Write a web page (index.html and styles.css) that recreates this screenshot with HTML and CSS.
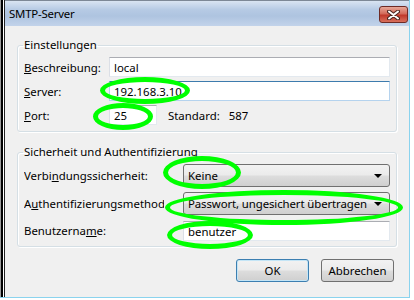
FILE: index.html
```html
<!DOCTYPE html>
<html lang="de">
<head>
  <meta charset="UTF-8">
  <meta name="viewport" content="width=device-width, initial-scale=1.0">
  <title>SMTP-Server</title>
  <link rel="stylesheet" href="styles.css">
</head>
<body>
  <div class="window">
    <div class="titlebar">
      <span class="title">SMTP-Server</span>
      <span class="close">
        <svg width="13" height="10" viewBox="0 0 13 10">
          <path d="M2 1.5 L11 8.5 M11 1.5 L2 8.5" stroke="#4a2420" stroke-width="4" stroke-linecap="round"/>
          <path d="M2 1.5 L11 8.5 M11 1.5 L2 8.5" stroke="#fff" stroke-width="2" stroke-linecap="round"/>
        </svg>
      </span>
    </div>

    <div class="content">
      <fieldset class="group group-settings">
        <legend>Einstellungen</legend>
        <div class="rows">
          <label class="label"><u>B</u>eschreibung:</label>
          <input class="field" type="text" value="local">

          <label class="label"><u>S</u>erver:</label>
          <input class="field focused" type="text" value="192.168.3.10">

          <label class="label"><u>P</u>ort:</label>
          <div class="port-line">
            <input class="field port" type="text" value="25">
            <span class="std">Standard:</span>
            <span class="std-value">587</span>
          </div>
        </div>
      </fieldset>

      <fieldset class="group group-security">
        <legend>Sicherheit und Authentifizierung</legend>
        <div class="rows">
          <label class="label">Verbi<u>n</u>dungssicherheit:</label>
          <div class="combo"><span>Keine</span><span class="arrow"></span></div>

          <label class="label clipped">A<u>u</u>thentifizierungsmethode:</label>
          <div class="combo second"><span>Passwort, ungesichert übertragen</span><span class="arrow"></span></div>

          <label class="label">Benutzerna<u>m</u>e:</label>
          <input class="field user" type="text" value="benutzer">
        </div>
      </fieldset>

      <div class="buttons">
        <button class="btn default">OK</button>
        <button class="btn">Abbrechen</button>
      </div>
    </div>

    <!-- green hand-drawn marks over the dialog -->
    <div class="mark mark-server"></div>
    <div class="mark mark-port"></div>
    <div class="mark mark-keine"></div>
    <div class="mark mark-auth"></div>
    <div class="mark mark-user"></div>
  </div>
</body>
</html>
```

FILE: styles.css
```css
body {
  margin: 0;
  background: #fff;
  font-family: "Noto Sans", sans-serif;
  font-size: 11.4px;
  color: #000;
}
.window {
  position: relative;
  width: 404px;
  height: 297px;
  padding-left: 5px;
  border-right: 1px solid #8ad3ee;
  border-bottom: 1px solid #8ad3ee;
  background: #f0f0f0;
  box-shadow: inset 1px 0 #9c9c9c, inset 3px 0 #000, inset 4px 0 #fff, inset 5px 0 #222;
  display: flex;
  flex-direction: column;
}
.titlebar {
  height: 26px;
  box-sizing: border-box;
  border-top: 1px solid #7d8896;
  background: linear-gradient(#d9e4f2 0, #b6cae4 35%, #aec4e0 60%, #c2d3ea 100%);
  display: flex;
  justify-content: space-between;
}
.title {
  padding-left: 4px;
  line-height: 25px;
  letter-spacing: -0.2px;
}
.close {
  width: 29px;
  height: 17px;
  box-sizing: border-box;
  margin-top: 5px;
  margin-right: 1px;
  border: 1px solid #6e2b25;
  border-radius: 3px;
  background: linear-gradient(#e7a898 0, #d36a5a 45%, #c0392b 55%, #d8705c 100%);
  display: flex;
  align-items: center;
  justify-content: center;
}
.content {
  flex: 1;
  padding: 11px 12px 0 12px;
}
.group {
  margin: 0;
  padding: 0 6px 6px;
  border: 1px solid #d5dfe5;
  border-radius: 3px;
  box-shadow: 1px 1px 0 #fff, inset 1px 1px 0 #fff;
}
.group legend {
  padding: 0 1px;
  margin-left: -1px;
  line-height: 16px;
}
.group-security {
  margin-top: 12px;
}
.rows {
  display: grid;
  align-items: center;
  margin-top: 4px;
}
.group-settings .rows {
  grid-template-columns: 85px 1fr;
  grid-auto-rows: 20px;
  row-gap: 4px;
}
.group-security .rows {
  grid-template-columns: 159px 1fr;
  grid-template-rows: 23px 23px 20px;
  row-gap: 5px;
}
.label {
  white-space: nowrap;
  overflow: hidden;
}
.label.clipped {
  width: 140px;
}
.label u {
  text-underline-offset: 1px;
}
.field {
  height: 20px;
  box-sizing: border-box;
  margin: 0;
  padding: 0 4px;
  border: 1px solid #e3e9ef;
  border-top-color: #abadb3;
  border-left-color: #dbdfe6;
  background: #fff;
  font: inherit;
  color: #000;
  width: 100%;
}
.field.focused {
  border-color: #b5d3ee;
  border-top-color: #3d7bad;
}
.port-line {
  display: flex;
  align-items: center;
}
.field.port {
  width: 48px;
}
.std {
  margin-left: 11px;
}
.std-value {
  margin-left: 9px;
}
.field.user {
  margin-top: 2px;
}
.combo {
  height: 23px;
  box-sizing: border-box;
  padding: 0 7px 0 4px;
  border: 1px solid #707070;
  border-radius: 3px;
  background: linear-gradient(#f2f2f2 0, #ebebeb 48%, #dddddd 52%, #cfcfcf 100%);
  display: flex;
  align-items: center;
  justify-content: space-between;
}
.combo.second span:first-child {
  letter-spacing: -0.1px;
}
.arrow {
  width: 0;
  height: 0;
  border-left: 4px solid transparent;
  border-right: 4px solid transparent;
  border-top: 4px solid #000;
}
.buttons {
  display: flex;
  justify-content: flex-end;
  gap: 12px;
  margin-top: 12px;
  padding-right: 3px;
}
.btn {
  width: 73px;
  height: 23px;
  margin: 0;
  padding: 0;
  border: 1px solid #707070;
  border-radius: 3px;
  background: linear-gradient(#f2f2f2 0, #ebebeb 48%, #dddddd 52%, #cfcfcf 100%);
  font: inherit;
  color: #000;
}
.btn.default {
  border-color: #3c7fb1;
  box-shadow: inset 0 0 0 1px #c4e5f6;
}
.mark {
  position: absolute;
  box-sizing: border-box;
  border: 5px solid #00ff00;
  border-radius: 50%;
}
.mark-server { left: 100px; top: 77px; width: 90px; height: 27px; }
.mark-port { left: 93px; top: 103px; width: 60px; height: 27px; }
.mark-keine { left: 163px; top: 156px; width: 78px; height: 33px; }
.mark-auth { left: 165px; top: 190px; width: 238px; height: 35px; }
.mark-user { left: 167px; top: 221px; width: 86px; height: 28px; }
```
